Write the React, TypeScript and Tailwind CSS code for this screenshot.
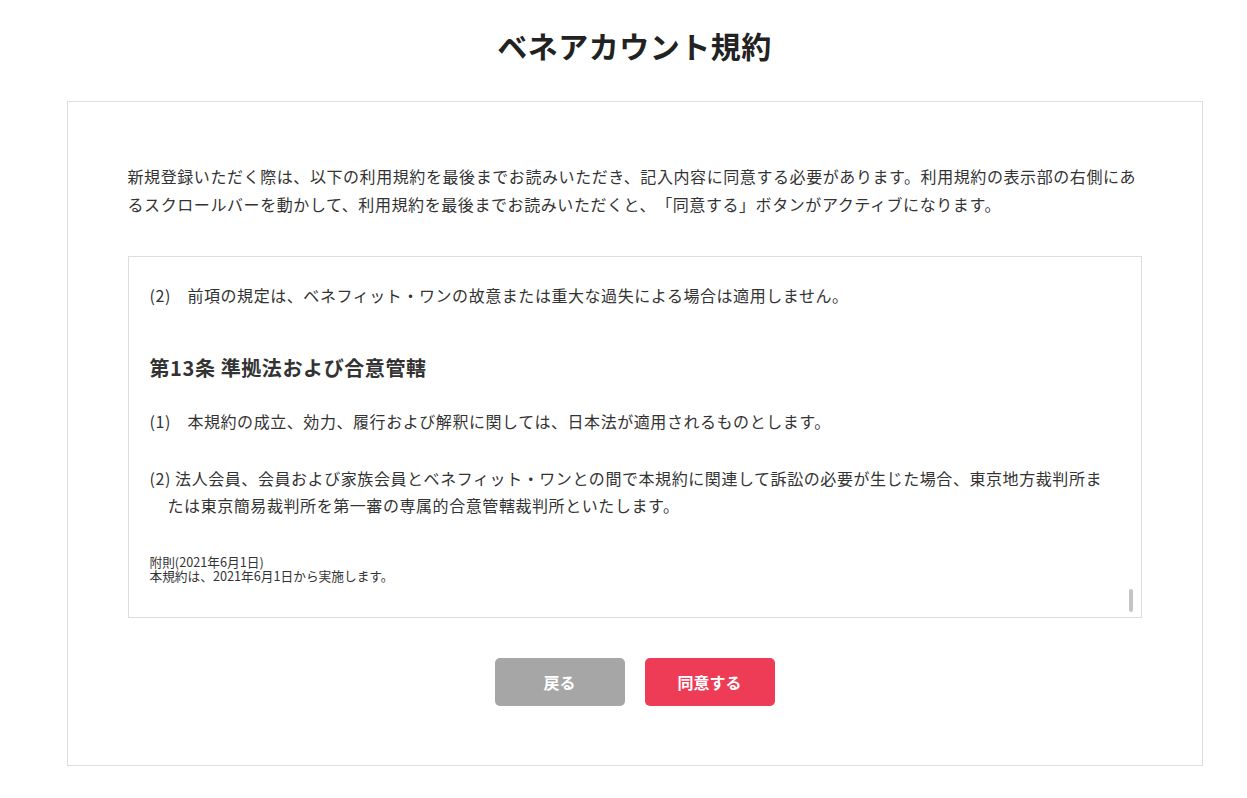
import React from 'react';

const jp = { fontFamily: '"Noto Sans CJK JP", "Noto Sans", sans-serif' };

export default function App() {
  return (
    <div className="min-h-[798px] bg-white text-[#333] pl-[22px] [text-spacing-trim:space-all]" style={jp}>
      <h1 className="pt-[22px] text-center text-[30px] leading-[46px] font-bold text-[#222] tracking-[0.5px]">
        ベネアカウント規約
      </h1>

      <div className="mx-auto mt-[33px] w-[1136px] border border-[#dddddd] px-[60px] pt-[60px] pb-[59px]">
        <p className="text-[16px] leading-[28px] tracking-[0.58px] whitespace-nowrap">
          新規登録いただく際は、以下の利用規約を最後までお読みいただき、記入内容に同意する必要があります。利用規約の表示部の右側にあ
          <br />
          るスクロールバーを動かして、利用規約を最後までお読みいただくと、「同意する」ボタンがアクティブになります。
        </p>

        <div className="relative mt-[38px] h-[362px] overflow-hidden border border-[#dddddd] px-[21px] pt-[24px]">
          <p className="text-[16px] leading-[28px] tracking-[0.56px] whitespace-nowrap">
            (2)　前項の規定は、ベネフィット・ワンの故意または重大な過失による場合は適用しません。
          </p>

          <h3 className="mt-[44px] text-[20px] leading-[30px] font-bold tracking-[0.6px]">第13条 準拠法および合意管轄</h3>

          <p className="mt-[24px] text-[16px] leading-[28px] tracking-[0.56px] whitespace-nowrap">
            (1)　本規約の成立、効力、履行および解釈に関しては、日本法が適用されるものとします。
          </p>

          <p className="mt-[30px] pl-[18px] -indent-[18px] text-[16px] leading-[27px] tracking-[0.57px] whitespace-nowrap">
            (2) 法人会員、会員および家族会員とベネフィット・ワンとの間で本規約に関連して訴訟の必要が生じた場合、東京地方裁判所ま
            <br />
            たは東京簡易裁判所を第一審の専属的合意管轄裁判所といたします。
          </p>

          <div className="mt-[36px] text-[12.7px] leading-[14px]">
            <p>附則(2021年6月1日)</p>
            <p>本規約は、2021年6月1日から実施します。</p>
          </div>

          <div className="absolute right-[8px] bottom-[5px] h-[23px] w-[4px] rounded-full bg-[#c4c4c4]" />
        </div>

        <div className="mt-[40px] flex justify-center gap-[20px]">
          <button className="h-[48px] w-[130px] rounded-[5px] bg-[#a6a6a6] text-[16px] font-bold text-white">
            戻る
          </button>
          <button className="h-[48px] w-[130px] rounded-[5px] bg-[#ee3b56] text-[16px] font-bold text-white">
            同意する
          </button>
        </div>
      </div>
    </div>
  );
}
